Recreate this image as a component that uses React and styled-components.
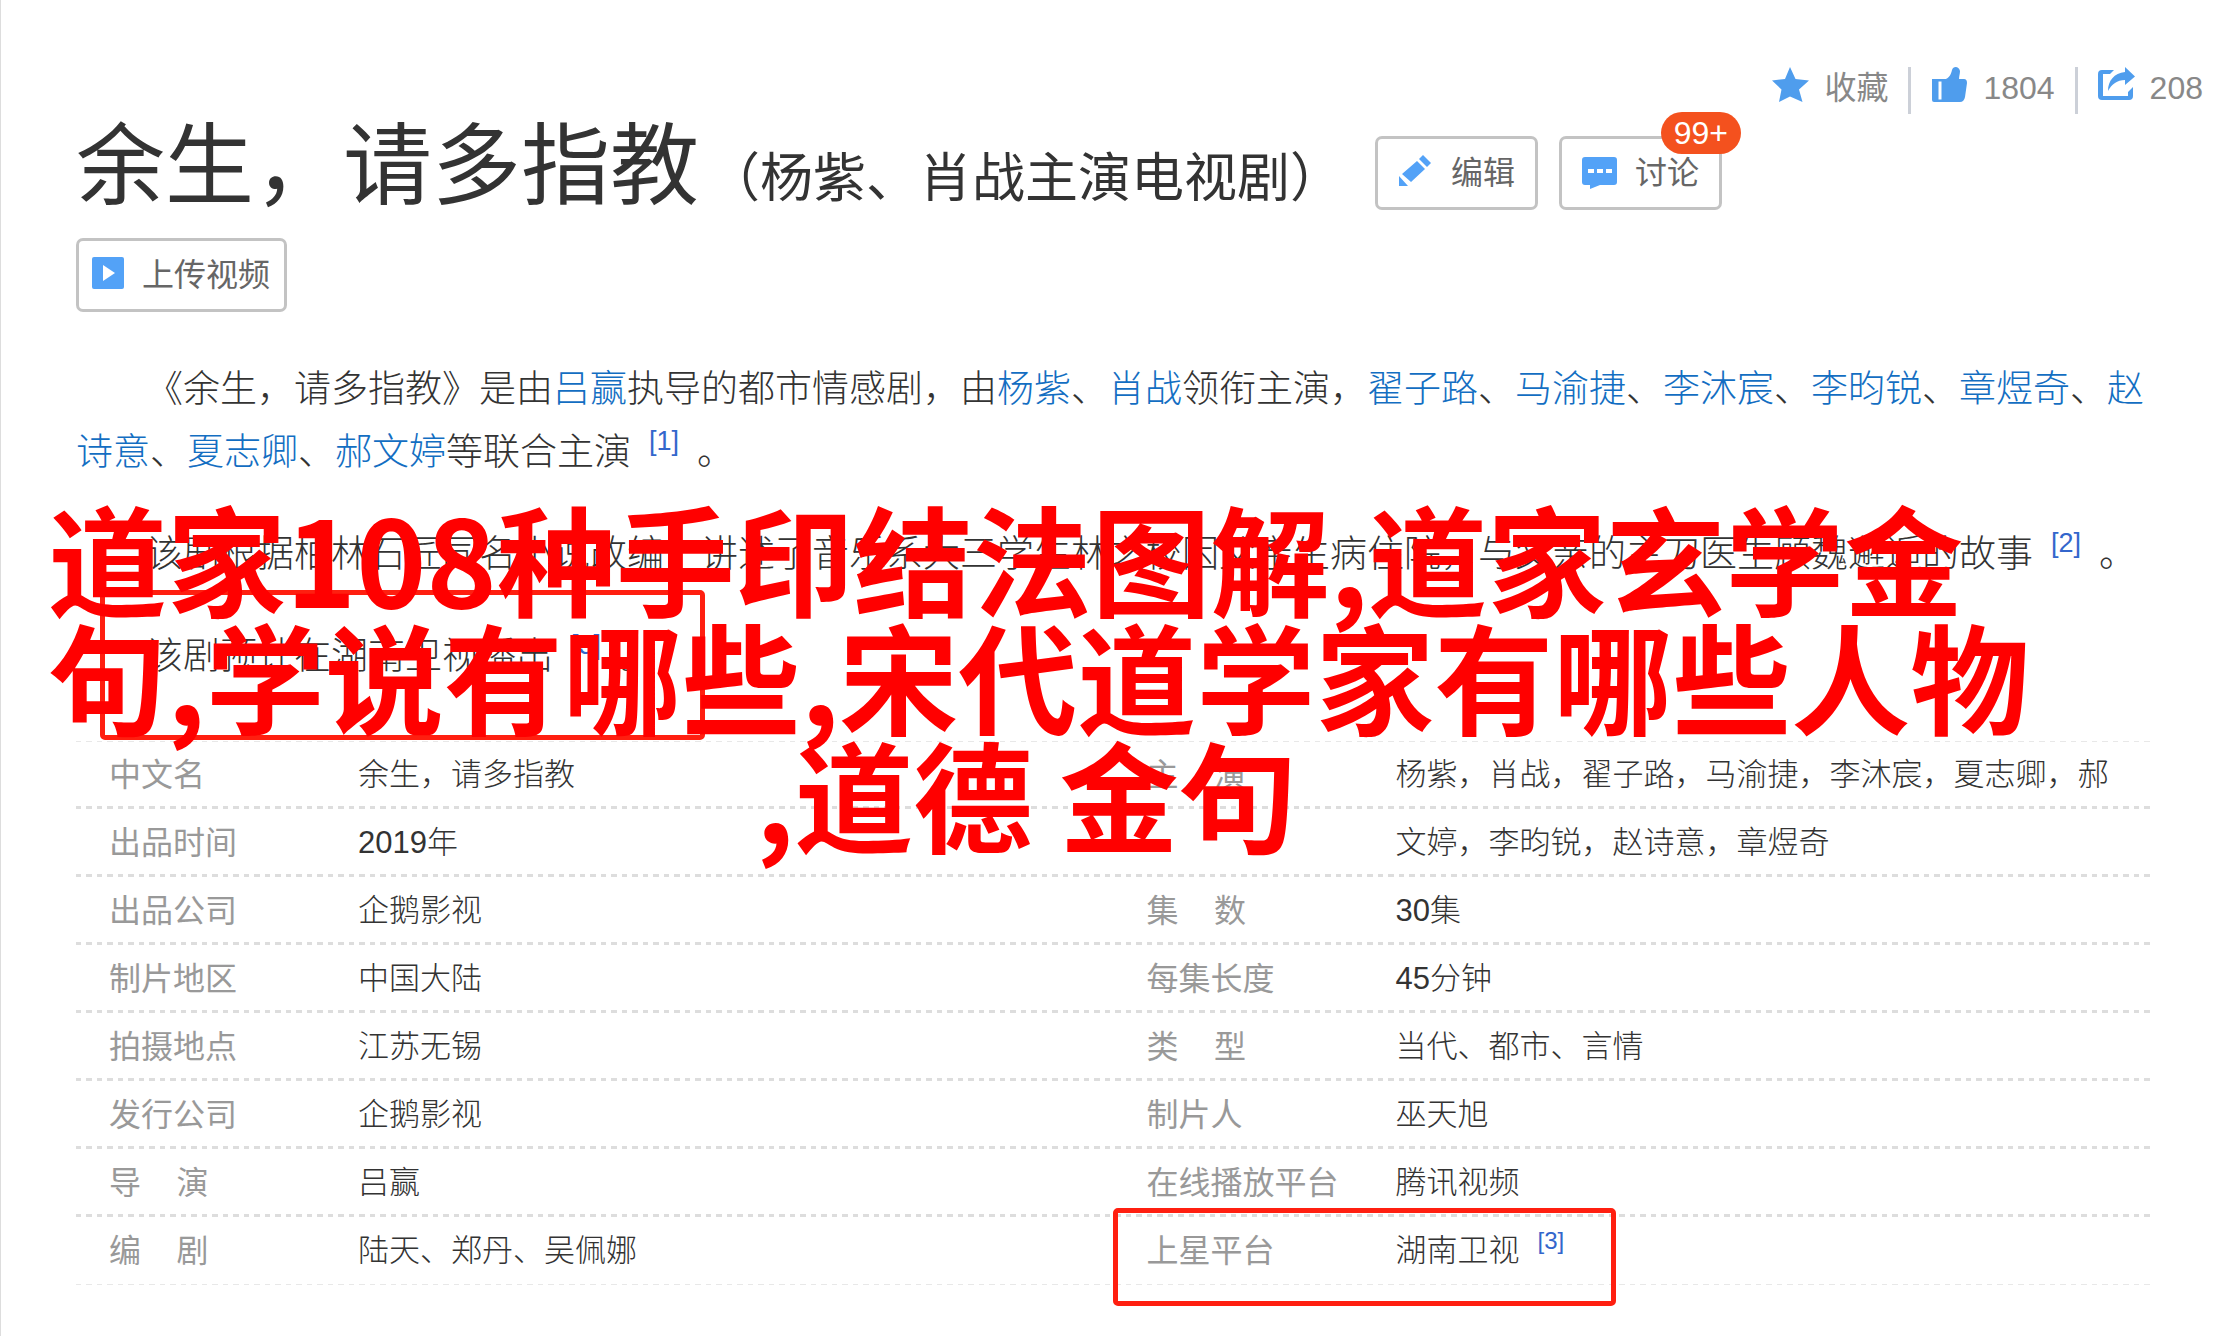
import React from 'react';
import styled, { createGlobalStyle } from 'styled-components';

const ink = '#333';
const linkBlue = '#136ec2';
const iconBlue = '#4f9ded';
const dash =
  'repeating-linear-gradient(to right, #ddd 0 5px, transparent 5px 10px, #ddd 10px 16px, transparent 16px 21px)';
const thinDash =
  'repeating-linear-gradient(to right, #e8e8e8 0 5px, transparent 5px 10px, #e8e8e8 10px 16px, transparent 16px 21px)';

const GlobalStyle = createGlobalStyle`
  * {
    box-sizing: border-box;
  }

  body {
    margin: 0;
    background: #fff;
    color: ${ink};
    font-family: 'Liberation Sans', 'Noto Sans CJK SC', sans-serif;
  }
`;

const Page = styled.div`
  position: relative;
  min-height: 100vh;
  overflow: hidden;
  border-left: 1px solid #ddd;
`;

const Toolbar = styled.div`
  display: flex;
  justify-content: flex-end;
  padding: 67px 20px 0 0;
`;

const ToolButton = styled.button`
  display: flex;
  align-items: center;
  gap: 15px;
  height: 47px;
  padding: 0 20px;
  border: 0;
  border-left: ${p => (p.$first ? '0' : '3px solid #ccd0d8')};
  background: none;
  color: #888;
  font: inherit;
  font-size: 32px;
  line-height: 42px;

  &:last-child {
    padding-right: 0;
  }

  svg {
    align-self: flex-start;
    width: 37px;
    height: 36px;
    fill: ${iconBlue};
  }
`;

const ToolText = styled.span`
  align-self: flex-start;
`;

const Content = styled.main`
  padding: 0 72px 0 75px;
`;

const Heading = styled.header`
  display: flex;
  flex-wrap: wrap;
  align-items: center;
  gap: 0 21px;
`;

const Title = styled.h1`
  margin: 0 11px 0 0;
  padding-bottom: 14px;
  font-size: 89px;
  font-weight: 400;
  line-height: 104px;
`;

const Subtitle = styled.small`
  margin-left: 8px;
  font-size: 53px;
  line-height: 1;
`;

const OutlineButton = styled.button`
  position: relative;
  display: flex;
  align-items: center;
  gap: ${p => (p.$wide ? '16px' : '18px')};
  height: 74px;
  padding: ${p => (p.$wide ? '0 14px 0 12px' : '0 20px')};
  border: 3px solid #c3c3c3;
  border-radius: 7px;
  background: #fff;
  color: #666;
  font: inherit;
  font-size: 32px;
  line-height: 40px;

  svg {
    width: 35px;
    height: 36px;
    fill: #53a2f7;
  }
`;

const Badge = styled.span`
  position: absolute;
  top: -27px;
  right: -22px;
  padding: 0 13px;
  border-radius: 21px;
  background: #f4511e;
  color: #fff;
  font-size: 32px;
  line-height: 42px;
`;

const UploadRow = styled.div`
  display: flex;
  margin-top: 6px;
`;

const Summary = styled.section`
  margin-top: 46px;
  font-size: 37px;
  font-weight: 300;
  line-height: 63px;
`;

const Paragraph = styled.p`
  position: relative;
  margin: 0 0 39px;
  text-indent: 70px;
`;

const Term = styled.a`
  color: ${linkBlue};
  text-decoration: none;
`;

const Cite = styled.sup`
  margin: 0 18px;
  color: #3366cc;
  font-size: ${p => (p.$small ? '24px' : '27px')};
  font-weight: 400;
  line-height: 0;
  vertical-align: ${p => (p.$small ? '12px' : '15px')};
`;

const Info = styled.table`
  width: 100%;
  margin-top: 53px;
  border-collapse: collapse;
  table-layout: fixed;
  background:
    ${thinDash} 0 0 / 100% 1px no-repeat,
    ${thinDash} 0 100% / 100% 1px no-repeat,
    linear-gradient(#fff, #fff) 0 100% / 100% 3px no-repeat,
    linear-gradient(#fff 0 65px, transparent 65px) 0 0 / 100% 68px,
    ${dash};
`;

const Label = styled.th`
  position: relative;
  height: 68px;
  padding: 0 0 0 33px;
  color: #999;
  font-size: 32px;
  font-weight: 400;
  line-height: 68px;
  text-align: left;
  vertical-align: top;
  white-space: nowrap;
`;

const Value = styled.td`
  padding: 0 32px 0 0;
  font-size: 31px;
  font-weight: 300;
  line-height: 68px;
  vertical-align: top;
`;

const Marker = styled.span`
  position: absolute;
  top: ${p => p.$top}px;
  left: ${p => p.$left}px;
  width: ${p => p.$width}px;
  height: ${p => p.$height}px;
  border: 5px solid #ff1f10;
  border-radius: 5px;
`;

const Overlay = styled.div`
  position: absolute;
  top: 497px;
  left: 47px;
  color: #f00;
  font-family: 'Noto Sans CJK SC', sans-serif;
  font-size: 119px;
  font-weight: 700;
  line-height: 118px;
  white-space: nowrap;
`;

const OverlayLine = styled.span`
  display: block;
  padding-right: ${p => (p.$center ? '24px' : '0')};
  text-align: ${p => (p.$center ? 'center' : 'left')};
`;

const StarIcon = () => (
  <svg viewBox="0 0 37 36" aria-hidden="true">
    <path d="M18 0l5.5 12L37 13.500 27 22.500l3.500 12.500L18 29.500 7 35l2.500-12.500L0 13.500 13 12z" />
  </svg>
);

const ThumbIcon = () => (
  <svg viewBox="0 0 37 36" aria-hidden="true">
    <path d="M1 12h14c4-2 5-5 6-9 1-4 7-4 8 1 0 3-1 5-1 8h5q3 0 3 4l-2 14q-1 5-5 5H3q-2 0-2-2z" />
    <path fill="#fff" d="M7.500 14.500h3v18h-3z" />
  </svg>
);

const ShareIcon = () => (
  <svg viewBox="0 0 37 36" aria-hidden="true">
    <path d="M16 3H4Q0 3 0 7v22q0 4 4 4h27q4 0 4-4v-9l-5 5v4H5V7h7z" />
    <path d="M27 0l10 9.500L27 18v-5c-8 0-13 4-17 11C10 14 16 6 27 5z" />
  </svg>
);

const PencilIcon = () => (
  <svg viewBox="0 0 35 36" aria-hidden="true">
    <path d="M25 0l8 8-4 4-8-8zM19 6l8 8-14 13-9-8zM1 21l9 10H1z" />
  </svg>
);

const CommentIcon = () => (
  <svg viewBox="0 0 35 36" aria-hidden="true">
    <path d="M3 2h29q3 0 3 3v22q0 3-3 3H18l-10 4v-4H3q-3 0-3-3V5q0-3 3-3z" />
    <path fill="#fff" d="M6 14h6v4H6zM15 14h6v4h-6zM24 14h6v4h-6z" />
  </svg>
);

const PlayIcon = () => (
  <svg viewBox="0 0 35 36" aria-hidden="true">
    <rect x="1" width="32" height="32" rx="2" />
    <path fill="#fff" d="M12 8l12 8-12 8z" />
  </svg>
);

const GAP = '\u00a0\u00a0\u00a0\u00a0';

const cast = ['翟子路', '马渝捷', '李沐宸', '李昀锐', '章煜奇', '赵诗意', '夏志卿'];

const rows = [
  ['中文名', '余生，请多指教'],
  ['出品时间', '2019年'],
  ['出品公司', '企鹅影视', `集${GAP}数`, '30集'],
  ['制片地区', '中国大陆', '每集长度', '45分钟'],
  ['拍摄地点', '江苏无锡', `类${GAP}型`, '当代、都市、言情'],
  ['发行公司', '企鹅影视', '制片人', '巫天旭'],
  [`导${GAP}演`, '吕赢', '在线播放平台', '腾讯视频'],
];

const App = () => (
  <Page lang="zh-CN">
    <GlobalStyle />
    <Toolbar>
      <ToolButton $first>
        <StarIcon />
        <ToolText>收藏</ToolText>
      </ToolButton>
      <ToolButton>
        <ThumbIcon />
        <ToolText>1804</ToolText>
      </ToolButton>
      <ToolButton>
        <ShareIcon />
        <ToolText>208</ToolText>
      </ToolButton>
    </Toolbar>

    <Content>
      <Heading>
        <Title>
          余生，请多指教
          <Subtitle>（杨紫、肖战主演电视剧）</Subtitle>
        </Title>
        <OutlineButton>
          <PencilIcon />
          编辑
        </OutlineButton>
        <OutlineButton>
          <CommentIcon />
          讨论
          <Badge>99+</Badge>
        </OutlineButton>
      </Heading>
      <UploadRow>
        <OutlineButton $wide>
          <PlayIcon />
          上传视频
        </OutlineButton>
      </UploadRow>

      <Summary>
        <Paragraph>
          《余生，请多指教》是由<Term href="#lvying">吕赢</Term>执导的都市情感剧，由
          <Term href="#yangzi">杨紫</Term>、<Term href="#xiaozhan">肖战</Term>领衔主演，
          {cast.map(name => (
            <React.Fragment key={name}>
              <Term href={`#${name}`}>{name}</Term>、
            </React.Fragment>
          ))}
          <Term href="#haowenting">郝文婷</Term>等联合主演<Cite>[1]</Cite>。
        </Paragraph>
        <Paragraph>
          该剧根据柏林石匠同名小说改编，讲述了音乐系大三学生林之校因父亲生病住院，与父亲的主刀医生顾魏邂逅的故事
          <Cite>[2]</Cite>。
        </Paragraph>
        <Paragraph>
          该剧预计在湖南卫视播出<Cite>[3]</Cite>。
          <Marker $top={-35} $left={24} $width={605} $height={150} />
        </Paragraph>
      </Summary>

      <Info>
        <colgroup>
          <col width="282" />
          <col />
          <col width="282" />
          <col />
        </colgroup>
        <tbody>
          {rows.map(([label, value, label2, value2], i) => (
            <tr key={label}>
              <Label scope="row">{label}</Label>
              <Value>{value}</Value>
              {i === 0 && (
                <>
                  <Label scope="row" rowSpan={2}>{`主${GAP}演`}</Label>
                  <Value rowSpan={2}>
                    杨紫，肖战，翟子路，马渝捷，李沐宸，夏志卿，郝
                    <br />
                    文婷，李昀锐，赵诗意，章煜奇
                  </Value>
                </>
              )}
              {label2 && (
                <>
                  <Label scope="row">{label2}</Label>
                  <Value>{value2}</Value>
                </>
              )}
            </tr>
          ))}
          <tr>
            <Label scope="row">{`编${GAP}剧`}</Label>
            <Value>陆天、郑丹、吴佩娜</Value>
            <Label scope="row">
              上星平台
              <Marker $top={-9} $left={-1} $width={503} $height={98} />
            </Label>
            <Value>
              湖南卫视<Cite $small>[3]</Cite>
            </Value>
          </tr>
        </tbody>
      </Info>
    </Content>

    <Overlay>
      <OverlayLine>道家108种手印结法图解,道家玄学金</OverlayLine>
      <OverlayLine>句,学说有哪些,宋代道学家有哪些人物</OverlayLine>
      <OverlayLine $center>,道德 金句</OverlayLine>
    </Overlay>
  </Page>
);

export default App;
